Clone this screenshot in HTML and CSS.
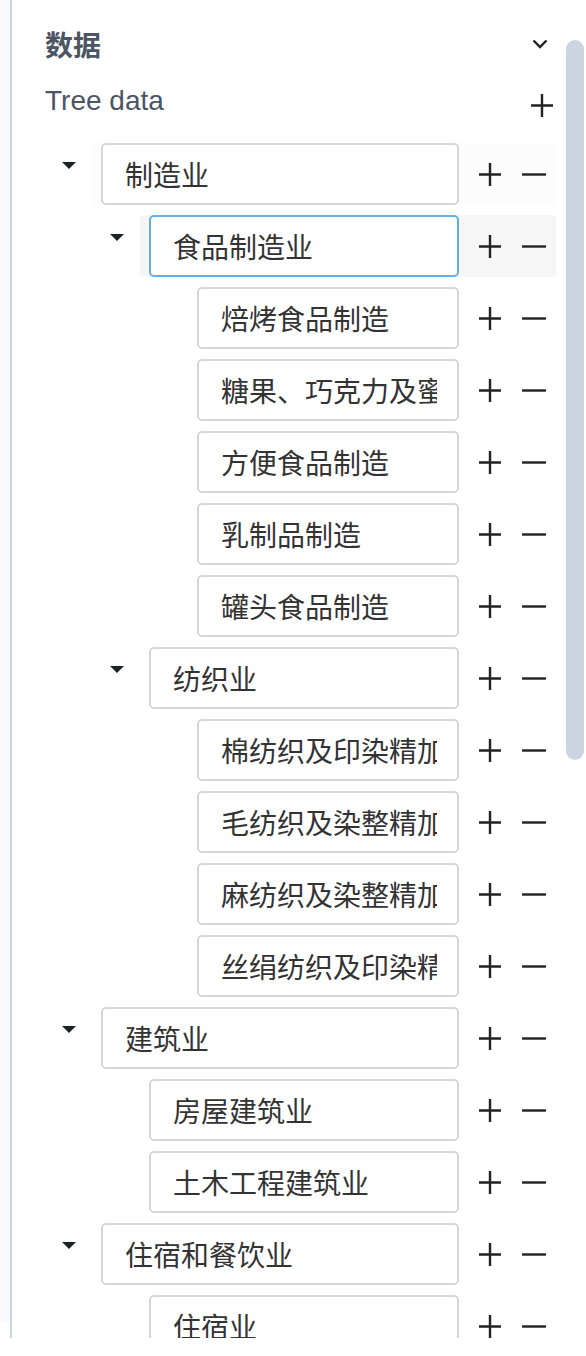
FILE: index.html
```html
<!DOCTYPE html>
<html lang="zh">
<head>
<meta charset="utf-8">
<title>数据</title>
<link rel="stylesheet" href="styles.css">
</head>
<body>
<div class="page">
  <div class="gutter"></div>
  <div class="panel">
    <div class="content">
      <div class="header">
        <span class="header-title">数据</span>
        <svg class="chevron" width="16" height="10" viewBox="0 0 16 10"><path d="M1.5 1.5 L8 8 L14.5 1.5" fill="none" stroke="#222" stroke-width="2.4"/></svg>
      </div>
      <div class="section">
        <span class="section-title">Tree data</span>
        <svg class="icon-plus add-root" width="22" height="23" viewBox="0 0 22 23"><path d="M0 11.5 H22 M11 0 V23" stroke="#222" stroke-width="2.4"/></svg>
      </div>

      <div class="tree">
        <div class="node">
          <div class="caret"><span class="tri"></span></div>
          <div class="row row-faint">
            <input class="field" value="制造业">
            <div class="actions">
              <svg class="icon-plus" width="22" height="23" viewBox="0 0 22 23"><path d="M0 11.5 H22 M11 0 V23" stroke="#222" stroke-width="2.4"/></svg>
              <svg class="icon-minus" width="24" height="3" viewBox="0 0 24 3"><path d="M0 1.5 H24" stroke="#222" stroke-width="2.4"/></svg>
            </div>
          </div>
        </div>

        <div class="node lvl2">
          <div class="caret"><span class="tri"></span></div>
          <div class="row row-hover">
            <input class="field focused" value="食品制造业">
            <div class="actions">
              <svg class="icon-plus" width="22" height="23" viewBox="0 0 22 23"><path d="M0 11.5 H22 M11 0 V23" stroke="#222" stroke-width="2.4"/></svg>
              <svg class="icon-minus" width="24" height="3" viewBox="0 0 24 3"><path d="M0 1.5 H24" stroke="#222" stroke-width="2.4"/></svg>
            </div>
          </div>
        </div>

        <div class="node lvl3">
          <div class="caret"></div>
          <div class="row">
            <input class="field" value="焙烤食品制造">
            <div class="actions">
              <svg class="icon-plus" width="22" height="23" viewBox="0 0 22 23"><path d="M0 11.5 H22 M11 0 V23" stroke="#222" stroke-width="2.4"/></svg>
              <svg class="icon-minus" width="24" height="3" viewBox="0 0 24 3"><path d="M0 1.5 H24" stroke="#222" stroke-width="2.4"/></svg>
            </div>
          </div>
        </div>

        <div class="node lvl3">
          <div class="caret"></div>
          <div class="row">
            <input class="field" value="糖果、巧克力及蜜饯制造">
            <div class="actions">
              <svg class="icon-plus" width="22" height="23" viewBox="0 0 22 23"><path d="M0 11.5 H22 M11 0 V23" stroke="#222" stroke-width="2.4"/></svg>
              <svg class="icon-minus" width="24" height="3" viewBox="0 0 24 3"><path d="M0 1.5 H24" stroke="#222" stroke-width="2.4"/></svg>
            </div>
          </div>
        </div>

        <div class="node lvl3">
          <div class="caret"></div>
          <div class="row">
            <input class="field" value="方便食品制造">
            <div class="actions">
              <svg class="icon-plus" width="22" height="23" viewBox="0 0 22 23"><path d="M0 11.5 H22 M11 0 V23" stroke="#222" stroke-width="2.4"/></svg>
              <svg class="icon-minus" width="24" height="3" viewBox="0 0 24 3"><path d="M0 1.5 H24" stroke="#222" stroke-width="2.4"/></svg>
            </div>
          </div>
        </div>

        <div class="node lvl3">
          <div class="caret"></div>
          <div class="row">
            <input class="field" value="乳制品制造">
            <div class="actions">
              <svg class="icon-plus" width="22" height="23" viewBox="0 0 22 23"><path d="M0 11.5 H22 M11 0 V23" stroke="#222" stroke-width="2.4"/></svg>
              <svg class="icon-minus" width="24" height="3" viewBox="0 0 24 3"><path d="M0 1.5 H24" stroke="#222" stroke-width="2.4"/></svg>
            </div>
          </div>
        </div>

        <div class="node lvl3">
          <div class="caret"></div>
          <div class="row">
            <input class="field" value="罐头食品制造">
            <div class="actions">
              <svg class="icon-plus" width="22" height="23" viewBox="0 0 22 23"><path d="M0 11.5 H22 M11 0 V23" stroke="#222" stroke-width="2.4"/></svg>
              <svg class="icon-minus" width="24" height="3" viewBox="0 0 24 3"><path d="M0 1.5 H24" stroke="#222" stroke-width="2.4"/></svg>
            </div>
          </div>
        </div>

        <div class="node lvl2">
          <div class="caret"><span class="tri"></span></div>
          <div class="row">
            <input class="field" value="纺织业">
            <div class="actions">
              <svg class="icon-plus" width="22" height="23" viewBox="0 0 22 23"><path d="M0 11.5 H22 M11 0 V23" stroke="#222" stroke-width="2.4"/></svg>
              <svg class="icon-minus" width="24" height="3" viewBox="0 0 24 3"><path d="M0 1.5 H24" stroke="#222" stroke-width="2.4"/></svg>
            </div>
          </div>
        </div>

        <div class="node lvl3">
          <div class="caret"></div>
          <div class="row">
            <input class="field" value="棉纺织及印染精加工">
            <div class="actions">
              <svg class="icon-plus" width="22" height="23" viewBox="0 0 22 23"><path d="M0 11.5 H22 M11 0 V23" stroke="#222" stroke-width="2.4"/></svg>
              <svg class="icon-minus" width="24" height="3" viewBox="0 0 24 3"><path d="M0 1.5 H24" stroke="#222" stroke-width="2.4"/></svg>
            </div>
          </div>
        </div>

        <div class="node lvl3">
          <div class="caret"></div>
          <div class="row">
            <input class="field" value="毛纺织及染整精加工">
            <div class="actions">
              <svg class="icon-plus" width="22" height="23" viewBox="0 0 22 23"><path d="M0 11.5 H22 M11 0 V23" stroke="#222" stroke-width="2.4"/></svg>
              <svg class="icon-minus" width="24" height="3" viewBox="0 0 24 3"><path d="M0 1.5 H24" stroke="#222" stroke-width="2.4"/></svg>
            </div>
          </div>
        </div>

        <div class="node lvl3">
          <div class="caret"></div>
          <div class="row">
            <input class="field" value="麻纺织及染整精加工">
            <div class="actions">
              <svg class="icon-plus" width="22" height="23" viewBox="0 0 22 23"><path d="M0 11.5 H22 M11 0 V23" stroke="#222" stroke-width="2.4"/></svg>
              <svg class="icon-minus" width="24" height="3" viewBox="0 0 24 3"><path d="M0 1.5 H24" stroke="#222" stroke-width="2.4"/></svg>
            </div>
          </div>
        </div>

        <div class="node lvl3">
          <div class="caret"></div>
          <div class="row">
            <input class="field" value="丝绢纺织及印染精加工">
            <div class="actions">
              <svg class="icon-plus" width="22" height="23" viewBox="0 0 22 23"><path d="M0 11.5 H22 M11 0 V23" stroke="#222" stroke-width="2.4"/></svg>
              <svg class="icon-minus" width="24" height="3" viewBox="0 0 24 3"><path d="M0 1.5 H24" stroke="#222" stroke-width="2.4"/></svg>
            </div>
          </div>
        </div>

        <div class="node">
          <div class="caret"><span class="tri"></span></div>
          <div class="row">
            <input class="field" value="建筑业">
            <div class="actions">
              <svg class="icon-plus" width="22" height="23" viewBox="0 0 22 23"><path d="M0 11.5 H22 M11 0 V23" stroke="#222" stroke-width="2.4"/></svg>
              <svg class="icon-minus" width="24" height="3" viewBox="0 0 24 3"><path d="M0 1.5 H24" stroke="#222" stroke-width="2.4"/></svg>
            </div>
          </div>
        </div>

        <div class="node lvl2">
          <div class="caret"></div>
          <div class="row">
            <input class="field" value="房屋建筑业">
            <div class="actions">
              <svg class="icon-plus" width="22" height="23" viewBox="0 0 22 23"><path d="M0 11.5 H22 M11 0 V23" stroke="#222" stroke-width="2.4"/></svg>
              <svg class="icon-minus" width="24" height="3" viewBox="0 0 24 3"><path d="M0 1.5 H24" stroke="#222" stroke-width="2.4"/></svg>
            </div>
          </div>
        </div>

        <div class="node lvl2">
          <div class="caret"></div>
          <div class="row">
            <input class="field" value="土木工程建筑业">
            <div class="actions">
              <svg class="icon-plus" width="22" height="23" viewBox="0 0 22 23"><path d="M0 11.5 H22 M11 0 V23" stroke="#222" stroke-width="2.4"/></svg>
              <svg class="icon-minus" width="24" height="3" viewBox="0 0 24 3"><path d="M0 1.5 H24" stroke="#222" stroke-width="2.4"/></svg>
            </div>
          </div>
        </div>

        <div class="node">
          <div class="caret"><span class="tri"></span></div>
          <div class="row">
            <input class="field" value="住宿和餐饮业">
            <div class="actions">
              <svg class="icon-plus" width="22" height="23" viewBox="0 0 22 23"><path d="M0 11.5 H22 M11 0 V23" stroke="#222" stroke-width="2.4"/></svg>
              <svg class="icon-minus" width="24" height="3" viewBox="0 0 24 3"><path d="M0 1.5 H24" stroke="#222" stroke-width="2.4"/></svg>
            </div>
          </div>
        </div>

        <div class="node lvl2">
          <div class="caret"></div>
          <div class="row">
            <input class="field" value="住宿业">
            <div class="actions">
              <svg class="icon-plus" width="22" height="23" viewBox="0 0 22 23"><path d="M0 11.5 H22 M11 0 V23" stroke="#222" stroke-width="2.4"/></svg>
              <svg class="icon-minus" width="24" height="3" viewBox="0 0 24 3"><path d="M0 1.5 H24" stroke="#222" stroke-width="2.4"/></svg>
            </div>
          </div>
        </div>
      </div>
    </div>
    <div class="scroll">
      <div class="thumb"></div>
    </div>
  </div>
</div>
</body>
</html>
```

FILE: styles.css
```css
html, body {
  margin: 0;
  padding: 0;
  background: #ffffff;
}

body {
  font-family: "Liberation Sans", "Noto Sans CJK SC", sans-serif;
  color: #333333;
}

.page {
  display: flex;
  align-items: flex-start;
  width: 586px;
  height: 1356px;
  overflow: hidden;
}

.gutter {
  width: 10px;
  height: 1322px;
  background: #f8fafc;
  flex: none;
}

.panel {
  flex: 1;
  display: flex;
  height: 1338px;
  overflow: hidden;
  border-left: 2px solid #cbd5e1;
}

.content {
  flex: 1;
  min-width: 0;
  padding: 24px 4px 0 33px;
}

.header {
  display: flex;
  justify-content: space-between;
  align-items: center;
  height: 40px;
}

.header-title {
  font-family: "Noto Sans CJK SC", sans-serif;
  font-size: 28px;
  font-weight: 600;
  color: #4b5563;
  line-height: 40px;
}

.chevron {
  display: block;
  margin-right: 8px;
}

.section {
  display: flex;
  justify-content: space-between;
  align-items: flex-start;
  height: 40px;
  margin-top: 17px;
}

.section-title {
  font-family: "Liberation Sans", sans-serif;
  font-size: 28px;
  line-height: 40px;
  color: #4b5563;
}

.add-root {
  margin-top: 13px;
  margin-right: 3px;
}

.icon-plus, .icon-minus {
  display: block;
  flex: none;
}

.tree {
  margin-top: 22px;
  display: flex;
  flex-direction: column;
  gap: 10px;
}

.node {
  display: flex;
  align-items: flex-start;
}

.lvl2 {
  margin-left: 48px;
}

.lvl3 {
  margin-left: 96px;
}

.caret {
  width: 47px;
  flex: none;
  height: 62px;
  display: flex;
  justify-content: center;
  padding-top: 19px;
  box-sizing: border-box;
}

.tri {
  width: 0;
  height: 0;
  border-left: 7px solid transparent;
  border-right: 7px solid transparent;
  border-top: 7px solid #1f2328;
}

.row {
  flex: 1;
  min-width: 0;
  display: flex;
  align-items: center;
  height: 62px;
  padding-left: 9px;
  border-radius: 4px;
}

.row-faint {
  background: #fcfcfc;
}

.row-hover {
  background: #f6f6f6;
}

.field {
  flex: 1;
  min-width: 0;
  height: 62px;
  box-sizing: border-box;
  border: 2px solid #d6d6d6;
  border-radius: 5px;
  padding: 0 20px 0 22px;
  font-family: "Noto Sans CJK SC", sans-serif;
  font-size: 28px;
  color: #333333;
  background: #ffffff;
  outline: none;
  margin: 0;
}

.field.focused {
  border-color: #63b0ee;
}

.actions {
  display: flex;
  align-items: center;
  gap: 21px;
  padding: 0 10px 0 20px;
  flex: none;
}

.scroll {
  width: 18px;
  margin-left: 6px;
  margin-right: 2px;
  flex: none;
}

.thumb {
  margin-top: 40px;
  height: 720px;
  border-radius: 9px;
  background: #cbd5e1;
}
```
